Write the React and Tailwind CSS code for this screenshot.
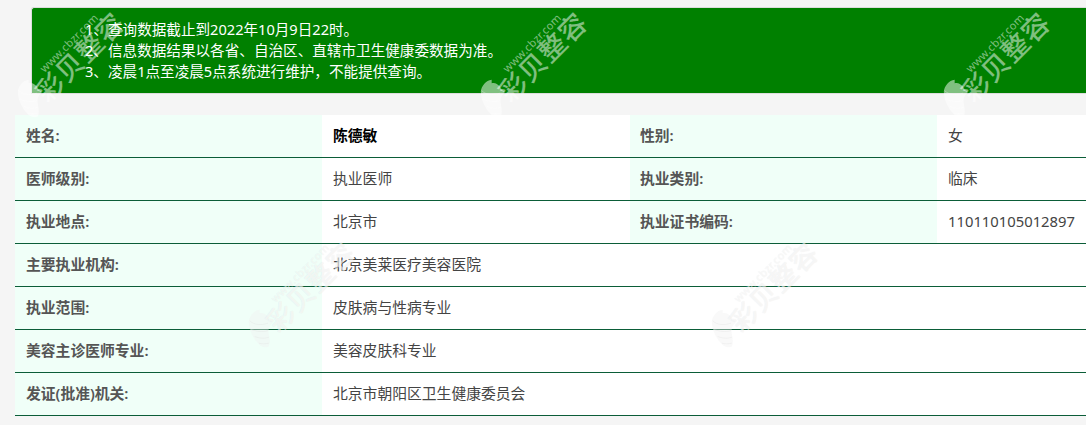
import React from 'react';

const rows = [
  { label: '姓名:', value: '陈德敏', strong: true, label2: '性别:', value2: '女' },
  { label: '医师级别:', value: '执业医师', label2: '执业类别:', value2: '临床' },
  { label: '执业地点:', value: '北京市', label2: '执业证书编码:', value2: '110110105012897' },
  { label: '主要执业机构:', value: '北京美莱医疗美容医院' },
  { label: '执业范围:', value: '皮肤病与性病专业' },
  { label: '美容主诊医师专业:', value: '美容皮肤科专业' },
  { label: '发证(批准)机关:', value: '北京市朝阳区卫生健康委员会' },
];

const Shell = ({ className, faint }) => (
  <svg viewBox="0 0 30 48" className={className} fill="none">
    <path d="M14 1C7 2 2 8 1 15c0 10 5 20 11 26 3 4 9 6 13 4 2-4 1-10 0-15-1-5 0-9 3-12 2-1 2-3 0-4-2 0-3-2-4-5-3-3-6-5-10-4z" fill="currentColor" />
    <path d="M2 14c5 5 13 6 22 3M3 24c6 3 14 4 21 2M8 33c5 2 11 3 17 1M13 41c4 1 8 1 12 0" stroke={faint ? '#ddd' : '#fff'} strokeOpacity="0.35" strokeWidth="1" />
  </svg>
);

// diagonal site watermark, sits on top of the page
const Watermark = ({ className, faint }) => (
  <div className={`absolute w-[130px] h-[125px] pointer-events-none select-none ${faint ? 'text-white/60 [text-shadow:0_0_1px_rgba(0,0,0,0.09)]' : 'text-white/50'} ${className}`}>
    <Shell faint={faint} className={`absolute left-[8px] top-[69px] w-[25px] h-[44px] ${faint ? 'text-[#f0f0f0]/40' : 'text-white/50'}`} />
    <div className="absolute left-[11px] top-[34px] w-[120px] text-center text-[27px] leading-[30px] font-medium tracking-[1px] whitespace-nowrap -rotate-45">彩贝整容</div>
    <div className="absolute left-[15px] top-[28px] w-[90px] text-center text-[11px] leading-[14px] tracking-[0.3px] whitespace-nowrap -rotate-45">www.cbzr.com</div>
  </div>
);

export default function App() {
  return (
    <div className="relative h-[425px] w-[1086px] overflow-hidden bg-[#f5f5f5] pl-[15px] pt-[7px] font-['Noto_Sans','Noto_Sans_CJK_SC',sans-serif] text-[14.8px]">
      <div className="ml-4 h-[87px] rounded-tl-[3px] border-y border-l border-[#ddd] bg-[#008000] pl-[53px] pt-[11px] text-[14.6px] leading-[21px] text-white">
        <p>1、查询数据截止到2022年10月9日22时。</p>
        <p>2、信息数据结果以各省、自治区、直辖市卫生健康委数据为准。</p>
        <p>3、凌晨1点至凌晨5点系统进行维护，不能提供查询。</p>
      </div>

      <div className="mt-[21px] bg-white">
        {rows.map((row) => (
          <div key={row.label} className="grid h-[43px] grid-cols-[307px_308px_307px_149px] border-b border-[#0b5d38] leading-[40px]">
            <div className="bg-[#f0fff8] pl-[11px] font-semibold text-[#555]">{row.label}</div>
            {row.label2 ? (
              <>
                <div className={`pl-[11px] ${row.strong ? 'font-semibold text-black' : 'text-[#444]'}`}>{row.value}</div>
                <div className="bg-[#f0fff8] pl-[10px] font-semibold text-[#555]">{row.label2}</div>
                <div className="pl-[11px] text-[#444]">{row.value2}</div>
              </>
            ) : (
              <div className="col-span-3 pl-[11px] text-[#444]">{row.value}</div>
            )}
          </div>
        ))}
      </div>

      <Watermark className="left-[9px] top-[8px]" />
      <Watermark className="left-[472px] top-[8px]" />
      <Watermark className="left-[935px] top-[8px]" />
      <Watermark faint className="left-[240px] top-[238px]" />
      <Watermark faint className="left-[703px] top-[238px]" />
    </div>
  );
}
